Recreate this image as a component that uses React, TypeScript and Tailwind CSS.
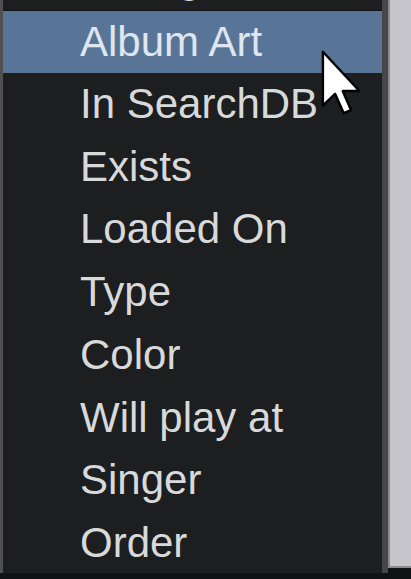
import React from "react";

const items = ["Rating", "Album Art", "In SearchDB", "Exists", "Loaded On", "Type", "Color", "Will play at", "Singer", "Order"];

export default function App() {
  return (
    <div className="relative w-[411px] h-[579px] overflow-hidden bg-[#111213] flex" style={{ fontFamily: '"Liberation Sans", Arial, sans-serif' }}>
      <div className="w-[3px] h-[573px] bg-[#505052]" />
      <div className="w-[379px] h-[573px] bg-[#1c1e20] overflow-hidden">
        <div className="flex flex-col mt-[-52.75px]">
          {items.map((t) => {
            const hi = t === "Album Art";
            return (
              <div
                key={t}
                className={
                  hi
                    ? "h-[62.75px] leading-[62.75px] pl-[77px] text-[42px] bg-[#587597] text-[#dfe6ef] border-t border-[#121416]"
                    : "h-[62.75px] leading-[62.75px] pl-[77px] text-[42px] text-[#d8d9db]"
                }
              >
                {t}
              </div>
            );
          })}
        </div>
      </div>
      <div className="w-[6px] h-[573px] bg-[#464648]" />
      <div className="flex flex-col h-[573px]">
        <div className="w-[23px] h-[566px] bg-[#c5c5cb] border-l-2 border-[#8a8a8e]" />
        <div className="h-[2px] bg-[#8a8a8e]" />
      </div>
      <svg className="absolute left-[320px] top-[50px]" width="44" height="66" viewBox="0 0 12 19">
        <path d="M0.5 0.5 L0.5 16 L4 12.6 L6.5 18.2 L8.6 17.3 L6.2 11.8 L11 11.8 Z" fill="#ffffff" stroke="#000000" strokeWidth="0.7" strokeLinejoin="round" />
      </svg>
    </div>
  );
}
